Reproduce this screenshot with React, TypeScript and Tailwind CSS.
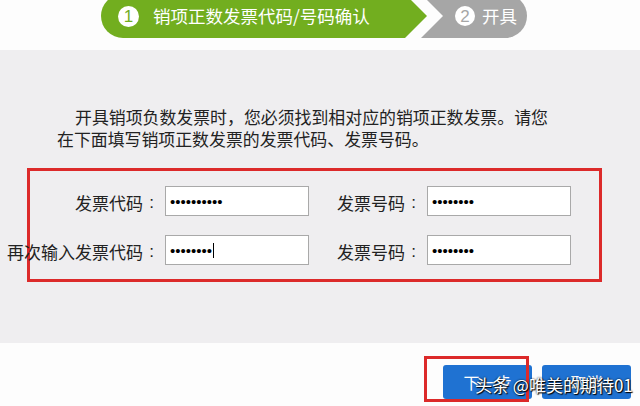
const CJK = "font-['Noto_Sans_CJK_SC','Liberation_Sans',sans-serif]";

function Dots({ count, caret }: { count: number; caret?: boolean }) {
  return (
    <div className="flex items-center h-[30px] w-[144px] border border-[#a9a9a9] bg-white pl-[4px] font-['Liberation_Sans',sans-serif] text-[15px] leading-none text-black">
      <span>{"•".repeat(count)}</span>
      {caret && <span className="ml-px w-px h-[15px] bg-black" />}
    </div>
  );
}

function Label({ text, width }: { text: string; width: string }) {
  return (
    <div className={`flex justify-end items-center h-[30px] ${width} whitespace-nowrap text-[17px] text-[#222] pt-[3px]`}>
      <span className="shrink-0">{text}</span>
      <span className="shrink-0 w-[17px] text-center font-['Liberation_Sans',sans-serif] text-[17px]">:</span>
    </div>
  );
}

export default function App() {
  return (
    <div className={`w-[640px] h-[406px] overflow-hidden bg-[#fdfdfd] ${CJK}`}>
      {/* step bar */}
      <div className="h-[50px] bg-[#fdfdfd] overflow-hidden">
        <div className="flex -mt-[6px] ml-[101px] h-[44px]">
          <div className="flex items-center h-full w-[326px] pl-[17px] bg-[#72ae1f] rounded-l-full [clip-path:polygon(0_0,calc(100%_-_22px)_0,100%_50%,calc(100%_-_22px)_100%,0_100%)]">
            <span className="flex items-center justify-center w-[21px] h-[21px] rounded-full bg-white text-[#72ae1f] font-['Liberation_Sans',sans-serif] text-[17px] leading-none">
              1
            </span>
            <span className="ml-[14px] text-white text-[17.5px] leading-none">销项正数发票代码/号码确认</span>
          </div>
          <div className="-ml-[6px] flex items-center h-full w-[106px] pl-[34px] bg-[#a6a6a6] rounded-r-full [clip-path:polygon(0_0,100%_0,100%_100%,0_100%,22px_50%)]">
            <span className="flex items-center justify-center w-[20px] h-[20px] rounded-full bg-white text-[#a6a6a6] font-['Liberation_Sans',sans-serif] text-[17px] leading-none">
              2
            </span>
            <span className="ml-[7px] text-white text-[17.5px] leading-none">开具</span>
          </div>
        </div>
      </div>

      {/* form area */}
      <div className="h-[293px] bg-[#efeef0] pt-[56px]">
        <p className="pl-[57px] indent-[18px] text-[16.9px] leading-[22px] text-[#222] whitespace-nowrap">
          开具销项负数发票时，您必须找到相对应的销项正数发票。请您
          <br />
          在下面填写销项正数发票的发票代码、发票号码。
        </p>
        <div className="mt-[18px] ml-[27px] w-[575px] h-[114px] border-[3px] border-[#dc2a2a] pt-[15px]">
          <div className="grid grid-cols-[130px_144px_108px_144px] gap-x-[5px] gap-y-[19px]">
            <Label text="发票代码" width="w-[130px]" />
            <Dots count={10} />
            <Label text="发票号码" width="w-[108px]" />
            <Dots count={8} />
            <Label text="再次输入发票代码" width="w-[130px]" />
            <Dots count={8} caret />
            <Label text="发票号码" width="w-[108px]" />
            <Dots count={8} />
          </div>
        </div>
      </div>

      {/* buttons */}
      <div className="relative h-[63px] bg-[#fdfdfd] flex justify-end items-start pt-[22px] pr-[9px] gap-[10px]">
        <button className="w-[89px] h-[34px] rounded-[3px] bg-[#1f72d2] text-white text-[16px]">下一步</button>
        <button className="w-[89px] h-[34px] rounded-[3px] bg-[#1f72d2] text-white text-[16px]">取消</button>
        <div className="absolute left-[424px] top-[13px] w-[105px] h-[46px] border-[3px] border-[#dc2a2a]" />
        <div className="absolute left-[475px] top-[30px] text-white text-[17px] leading-[24px] whitespace-nowrap [text-shadow:0_0_2px_#000,1px_1px_1px_#000]">
          头条 @唯美的期待01
        </div>
      </div>
    </div>
  );
}
